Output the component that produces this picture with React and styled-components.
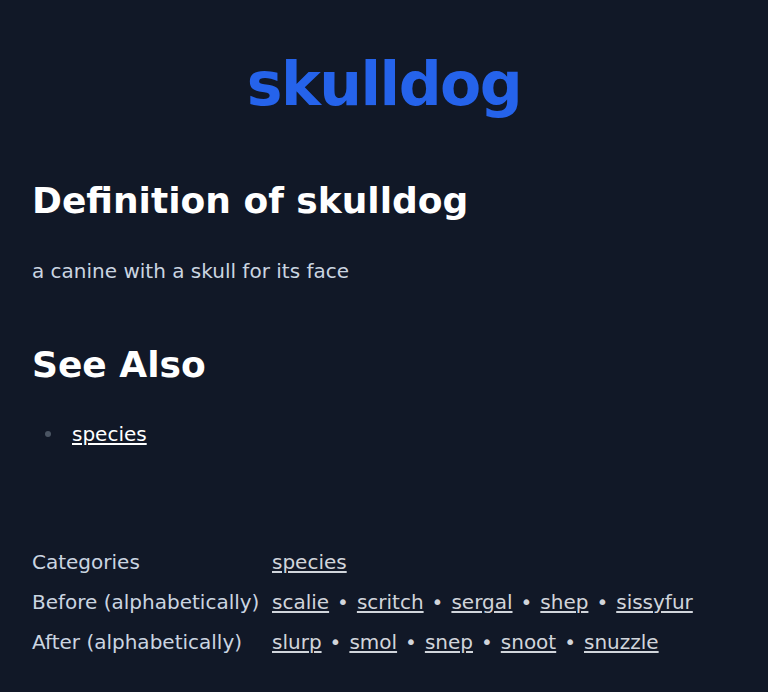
import React from 'react';
import styled, { createGlobalStyle } from 'styled-components';

const GlobalStyle = createGlobalStyle`
    body {
        margin: 0;
        background: #111827;
        font-family: "DejaVu Sans", "Liberation Sans", sans-serif;
    }
`;

const Page = styled.div`
    min-height: 692px;
    background: #111827;
    padding: 48px 32px 32px;
    box-sizing: border-box;
    color: #d1d5db;
`;

const Title = styled.h1`
    margin: 0 0 61px;
    text-align: center;
    font-size: 60px;
    line-height: 72px;
    font-weight: 700;
    letter-spacing: -0.025em;
    color: #2563eb;
`;

const Heading = styled.h2`
    margin: 0;
    font-size: 36px;
    line-height: 40px;
    font-weight: 700;
    color: #ffffff;
`;

const Section = styled.section`
    margin-bottom: ${props => props.gap || 60}px;
`;

const Text = styled.p`
    margin: 36px 0 0;
    font-size: 20px;
    line-height: 28px;
    color: #cbd5e1;
`;

const List = styled.ul`
    margin: 35px 0 0;
    padding-left: 13px;
    list-style: none;
    font-size: 20px;
    line-height: 28px;
`;

const Item = styled.li`
    display: flex;
    align-items: center;
    &::before {
        content: "";
        width: 6px;
        height: 6px;
        margin-right: 21px;
        border-radius: 50%;
        background: #4b5563;
    }
`;

const Link = styled.a`
    color: ${props => props.bright ? '#ffffff' : '#d1d5db'};
    text-decoration: underline;
    text-underline-offset: 2px;
`;

const Meta = styled.div`
    display: grid;
    grid-template-columns: 240px 1fr;
    row-gap: 12px;
    font-size: 20px;
    line-height: 28px;
    color: #cbd5e1;
`;

const Dot = styled.span`
    margin: 0 8px;
    color: #d1d5db;
`;

const before = ['scalie', 'scritch', 'sergal', 'shep', 'sissyfur'];
const after = ['slurp', 'smol', 'snep', 'snoot', 'snuzzle'];

const Links = ({ words }) => (
    <div>
        {words.map((w, i) => (
            <React.Fragment key={w}>
                {i > 0 && <Dot>•</Dot>}
                <Link href="#">{w}</Link>
            </React.Fragment>
        ))}
    </div>
);

export default function App() {
    return (
        <Page>
            <GlobalStyle />
            <Title>skulldog</Title>
            <Section>
                <Heading>Definition of skulldog</Heading>
                <Text>a canine with a skull for its face</Text>
            </Section>
            <Section gap={100}>
                <Heading>See Also</Heading>
                <List>
                    <Item><Link href="#" bright>species</Link></Item>
                </List>
            </Section>
            <Meta>
                <span>Categories</span>
                <div><Link href="#">species</Link></div>
                <span>Before (alphabetically)</span>
                <Links words={before} />
                <span>After (alphabetically)</span>
                <Links words={after} />
            </Meta>
        </Page>
    );
}
